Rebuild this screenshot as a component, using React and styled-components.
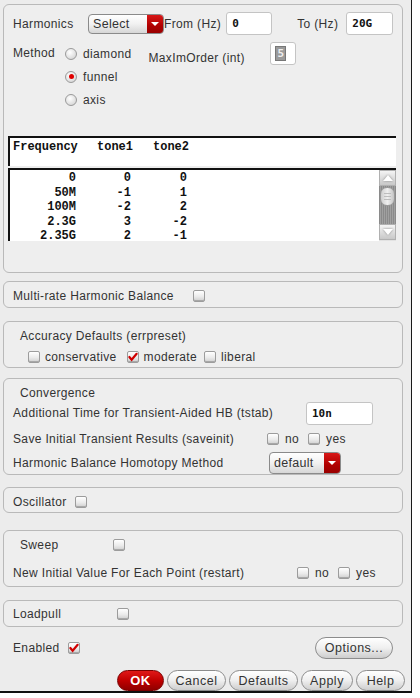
import React from 'react';
import styled, { createGlobalStyle } from 'styled-components';

const Global = createGlobalStyle`
  html, body {
    margin: 0;
    padding: 0;
    background: #ffffff;
  }
  body {
    font-family: "Liberation Sans", Arial, sans-serif;
    font-size: 12px;
    color: #333;
  }
`;

const Dialog = styled.div`
  width: 412px;
  height: 693px;
  box-sizing: border-box;
  background: #ececec;
  border-right: 1px solid #1a1a1a;
  border-bottom: 2px solid #111;
  padding: 4px 0 0 3px;
  display: flex;
  flex-direction: column;
`;

const Panel = styled.div`
  width: 400px;
  box-sizing: border-box;
  height: ${p => p.$h}px;
  margin-bottom: ${p => p.$mb || 0}px;
  border: 1px solid #b9b9b9;
  border-radius: 6px;
  background: #eeeeee;
  display: flex;
  flex-direction: column;
  padding: ${p => p.$pad || '0 0 0 9px'};
`;

const Text = styled.span`
  letter-spacing: 0.35px;
  white-space: nowrap;
  width: ${p => (p.$w ? p.$w + 'px' : 'auto')};
  margin-left: ${p => p.$ml || 0}px;
  margin-top: ${p => p.$mt || 0}px;
  flex: none;
`;

const Row = styled.div`
  display: flex;
  align-items: ${p => p.$align || 'center'};
  height: ${p => p.$h || 20}px;
  margin-top: ${p => p.$mt || 0}px;
  padding-left: ${p => p.$pl || 0}px;
`;

const Field = styled.div`
  width: ${p => p.$w}px;
  height: 23px;
  box-sizing: border-box;
  margin-left: ${p => p.$ml || 0}px;
  background: #fff;
  border: 1px solid #c4c4c4;
  border-radius: 3px;
  font-family: "DejaVu Sans Mono", monospace;
  font-weight: bold;
  font-size: 11px;
  color: #111;
  display: flex;
  align-items: center;
  padding-left: 5px;
  flex: none;
`;

const Selected = styled.span`
  background: #9a9a9a;
  color: #eee;
  outline: 1px solid #777;
  padding: 0 1px;
`;

const DropBox = styled.div`
  width: ${p => p.$w}px;
  height: ${p => p.$h || 20}px;
  box-sizing: border-box;
  margin-left: ${p => p.$ml || 0}px;
  border: 1px solid #8a8a8a;
  border-radius: 4px;
  background: linear-gradient(#ffffff, #f1f1f1 50%, #d6d6d6);
  display: flex;
  align-items: center;
  overflow: hidden;
  flex: none;
  font-size: 12.5px;
  letter-spacing: 0.3px;
  color: #333;
`;

const DropLabel = styled.span`
  flex: 1;
  padding-left: 4px;
`;

const DropArrow = styled.div`
  width: 16px;
  align-self: stretch;
  background: linear-gradient(#d81818, #b00000 60%, #900);
  display: flex;
  align-items: center;
  justify-content: center;
  &::after {
    content: '';
    border-left: 4px solid transparent;
    border-right: 4px solid transparent;
    border-top: 4px solid #fff;
  }
`;

const Dropdown = ({ label, w, ml, h }) => (
  <DropBox $w={w} $ml={ml} $h={h}>
    <DropLabel>{label}</DropLabel>
    <DropArrow />
  </DropBox>
);

const RadioCircle = styled.span`
  width: 12px;
  height: 12px;
  box-sizing: border-box;
  border-radius: 50%;
  border: 1px solid #9a9a9a;
  background: radial-gradient(circle at 40% 35%, #fff, #dcdcdc 70%, #b5b5b5);
  display: inline-flex;
  align-items: center;
  justify-content: center;
  margin-right: 6px;
  flex: none;
  &::after {
    content: '';
    width: 5px;
    height: 5px;
    border-radius: 50%;
    background: ${p => (p.$on ? '#e00000' : 'transparent')};
  }
`;

const RadioRow = styled.div`
  display: flex;
  align-items: center;
  height: 23px;
`;

const Box = styled.span`
  width: 12px;
  height: 12px;
  box-sizing: border-box;
  border: 1px solid #9c9c9c;
  border-radius: 2px;
  background: linear-gradient(#ffffff, #ebebeb 55%, #cfcfcf);
  box-shadow: inset 0 -1px 0 #a8a8a8;
  margin-left: ${p => p.$ml || 0}px;
  margin-right: ${p => p.$mr || 0}px;
  display: inline-flex;
  align-items: center;
  justify-content: center;
  flex: none;
`;

const Check = ({ on, ml, mr }) => (
  <Box $ml={ml} $mr={mr}>
    {on && (
      <svg width="11" height="10" viewBox="0 0 11 10">
        <path d="M1.5 5 L4 8 L9.5 1.5" stroke="#d00000" strokeWidth="2.4" fill="none" strokeLinecap="round" />
      </svg>
    )}
  </Box>
);

const TableHead = styled.div`
  margin: 25px 0 0 -5px;
  width: 388px;
  height: 30px;
  box-sizing: border-box;
  background: #fff;
  border-top: 2px solid #111;
  border-left: 2px solid #111;
  font-family: "Liberation Mono", monospace;
  font-weight: bold;
  font-size: 12px;
  color: #111;
  display: flex;
  padding: 2px 0 0 3px;
`;

const HeadCell = styled.span`
  width: ${p => p.$w}px;
  flex: none;
`;

const TableBody = styled.div`
  margin: 2px 0 0 -5px;
  width: 388px;
  height: 73px;
  box-sizing: border-box;
  background: #fff;
  border-top: 2px solid #111;
  border-left: 2px solid #111;
  display: flex;
`;

const Rows = styled.div`
  flex: 1;
  padding-top: 1px;
  font-family: "Liberation Mono", monospace;
  font-weight: bold;
  font-size: 12px;
  color: #111;
`;

const DataRow = styled.div`
  display: flex;
  height: 14.5px;
  line-height: 14.5px;
`;

const Cell = styled.span`
  width: ${p => p.$w}px;
  text-align: right;
  flex: none;
`;

const Scroll = styled.div`
  width: 17px;
  display: flex;
  flex-direction: column;
  padding-bottom: 1px;
  background: #e2e2e2;
`;

const ScrollBtn = styled.div`
  height: 14px;
  background: linear-gradient(#f4f4f4, #c8c8c8);
  border: 1px solid #b0b0b0;
  display: flex;
  align-items: center;
  justify-content: center;
  &::after {
    content: '';
    border-left: 5px solid transparent;
    border-right: 5px solid transparent;
    ${p => (p.$up ? 'border-bottom: 6px solid #fff;' : 'border-top: 6px solid #fff;')}
    filter: drop-shadow(0 0 1px #888);
  }
`;

const Track = styled.div`
  flex: 1;
  background: repeating-linear-gradient(90deg, #8a8a8a 0 1px, #a0a0a0 1px 2px);
  display: flex;
  flex-direction: column;
  align-items: center;
  padding-top: 1px;
`;

const Thumb = styled.div`
  width: 15px;
  height: 19px;
  border-radius: 7px;
  border: 1px solid #9a9a9a;
  box-sizing: border-box;
  background-image: repeating-linear-gradient(#bdbdbd 0 1px, transparent 1px 3px), linear-gradient(90deg, #cfcfcf, #efefef, #c4c4c4);
  background-size: 7px 8px, 100% 100%;
  background-position: center, 0 0;
  background-repeat: no-repeat;
`;

const Footer = styled.div`
  display: flex;
  align-items: center;
  justify-content: space-between;
  width: 390px;
  margin-top: 10px;
  padding-left: 10px;
  box-sizing: border-box;
`;

const Buttons = styled.div`
  display: flex;
  gap: 3px;
  margin: 11px 0 0 114px;
`;

const Btn = styled.button`
  width: ${p => p.$w}px;
  height: ${p => p.$h || 21}px;
  box-sizing: border-box;
  border: 1px solid ${p => (p.$primary ? '#7a0000' : '#8c8c8c')};
  border-radius: 11px;
  background: ${p =>
    p.$primary
      ? 'linear-gradient(#e01818, #c00000 50%, #8f0000)'
      : 'linear-gradient(#ffffff, #efefef 50%, #cdcdcd)'};
  color: ${p => (p.$primary ? '#fff' : '#333')};
  font-family: "Liberation Sans", Arial, sans-serif;
  font-size: ${p => (p.$primary ? 13 : 12.5)}px;
  font-weight: ${p => (p.$primary ? 'bold' : 'normal')};
  letter-spacing: 0.5px;
  padding: 0;
  flex: none;
`;

const data = [
  ['0', '0', '0'],
  ['50M', '-1', '1'],
  ['100M', '-2', '2'],
  ['2.3G', '3', '-2'],
  ['2.35G', '2', '-1'],
];

export default function App() {
  return (
    <>
      <Global />
      <Dialog>
        <Panel $h={271} $mb={8}>
          <Row $h={25} $mt={6}>
            <Text $w={75}>Harmonics</Text>
            <Dropdown label="Select" w={76} />
            <Text>From (Hz)</Text>
            <Field $w={46} $ml={5}>0</Field>
            <Text $ml={25}>To (Hz)</Text>
            <Field $w={47} $ml={8}>20G</Field>
          </Row>
          <Row $h={69} $mt={6} $align="flex-start">
            <Text $w={52} $mt={4}>Method</Text>
            <div>
              {['diamond', 'funnel', 'axis'].map(m => (
                <RadioRow key={m}>
                  <RadioCircle $on={m === 'funnel'} />
                  <Text>{m}</Text>
                </RadioRow>
              ))}
            </div>
            <Text $w={120} $ml={17} $mt={9}>MaxImOrder (int)</Text>
            <Field $w={26} $ml={2}><Selected>5</Selected></Field>
          </Row>
          <TableHead>
            <HeadCell $w={84}>Frequency</HeadCell>
            <HeadCell $w={56}>tone1</HeadCell>
            <HeadCell $w={56}>tone2</HeadCell>
          </TableHead>
          <TableBody>
            <Rows>
              {data.map((r, i) => (
                <DataRow key={i}>
                  <Cell $w={66}>{r[0]}</Cell>
                  <Cell $w={55}>{r[1]}</Cell>
                  <Cell $w={56}>{r[2]}</Cell>
                </DataRow>
              ))}
            </Rows>
            <Scroll>
              <ScrollBtn $up />
              <Track><Thumb /></Track>
              <ScrollBtn />
            </Scroll>
          </TableBody>
        </Panel>

        <Panel $h={27} $mb={13}>
          <Row $h={25} $mt={2}>
            <Text $w={180}>Multi-rate Harmonic Balance</Text>
            <Check />
          </Row>
        </Panel>

        <Panel $h={47} $mb={10} $pad="0 0 0 16px">
          <Row $h={18} $mt={6}>
            <Text>Accuracy Defaults (errpreset)</Text>
          </Row>
          <Row $h={22} $mt={3} $pl={8}>
            <Check mr={5} />
            <Text>conservative</Text>
            <Check ml={10} mr={5} on />
            <Text>moderate</Text>
            <Check ml={7} mr={5} />
            <Text>liberal</Text>
          </Row>
        </Panel>

        <Panel $h={97} $mb={12}>
          <Row $h={18} $mt={6} $pl={7}>
            <Text>Convergence</Text>
          </Row>
          <Row $h={24} $mt={1}>
            <Text $w={293}>Additional Time for Transient-Aided HB (tstab)</Text>
            <Field $w={67}>10n</Field>
          </Row>
          <Row $h={20} $mt={6}>
            <Text $w={254}>Save Initial Transient Results (saveinit)</Text>
            <Check mr={6} />
            <Text>no</Text>
            <Check ml={9} mr={6} />
            <Text>yes</Text>
          </Row>
          <Row $h={24} $mt={5}>
            <Text $w={256}>Harmonic Balance Homotopy Method</Text>
            <Dropdown label="default" w={72} h={22} />
          </Row>
        </Panel>

        <Panel $h={26} $mb={17}>
          <Row $h={24} $mt={3}>
            <Text $w={62}>Oscillator</Text>
            <Check />
          </Row>
        </Panel>

        <Panel $h={57} $mb={13}>
          <Row $h={18} $mt={5} $pl={7}>
            <Text $w={93}>Sweep</Text>
            <Check />
          </Row>
          <Row $h={22} $mt={8}>
            <Text $w={284}>New Initial Value For Each Point (restart)</Text>
            <Check mr={6} />
            <Text>no</Text>
            <Check ml={9} mr={6} />
            <Text>yes</Text>
          </Row>
        </Panel>

        <Panel $h={27}>
          <Row $h={24} $mt={1}>
            <Text $w={104}>Loadpull</Text>
            <Check />
          </Row>
        </Panel>

        <Footer>
          <Row $h={22}>
            <Text $w={55}>Enabled</Text>
            <Check on />
          </Row>
          <Btn $w={78} $h={22}>Options...</Btn>
        </Footer>

        <Buttons>
          <Btn $w={47} $primary>OK</Btn>
          <Btn $w={59}>Cancel</Btn>
          <Btn $w={69}>Defaults</Btn>
          <Btn $w={52}>Apply</Btn>
          <Btn $w={49}>Help</Btn>
        </Buttons>
      </Dialog>
    </>
  );
}
